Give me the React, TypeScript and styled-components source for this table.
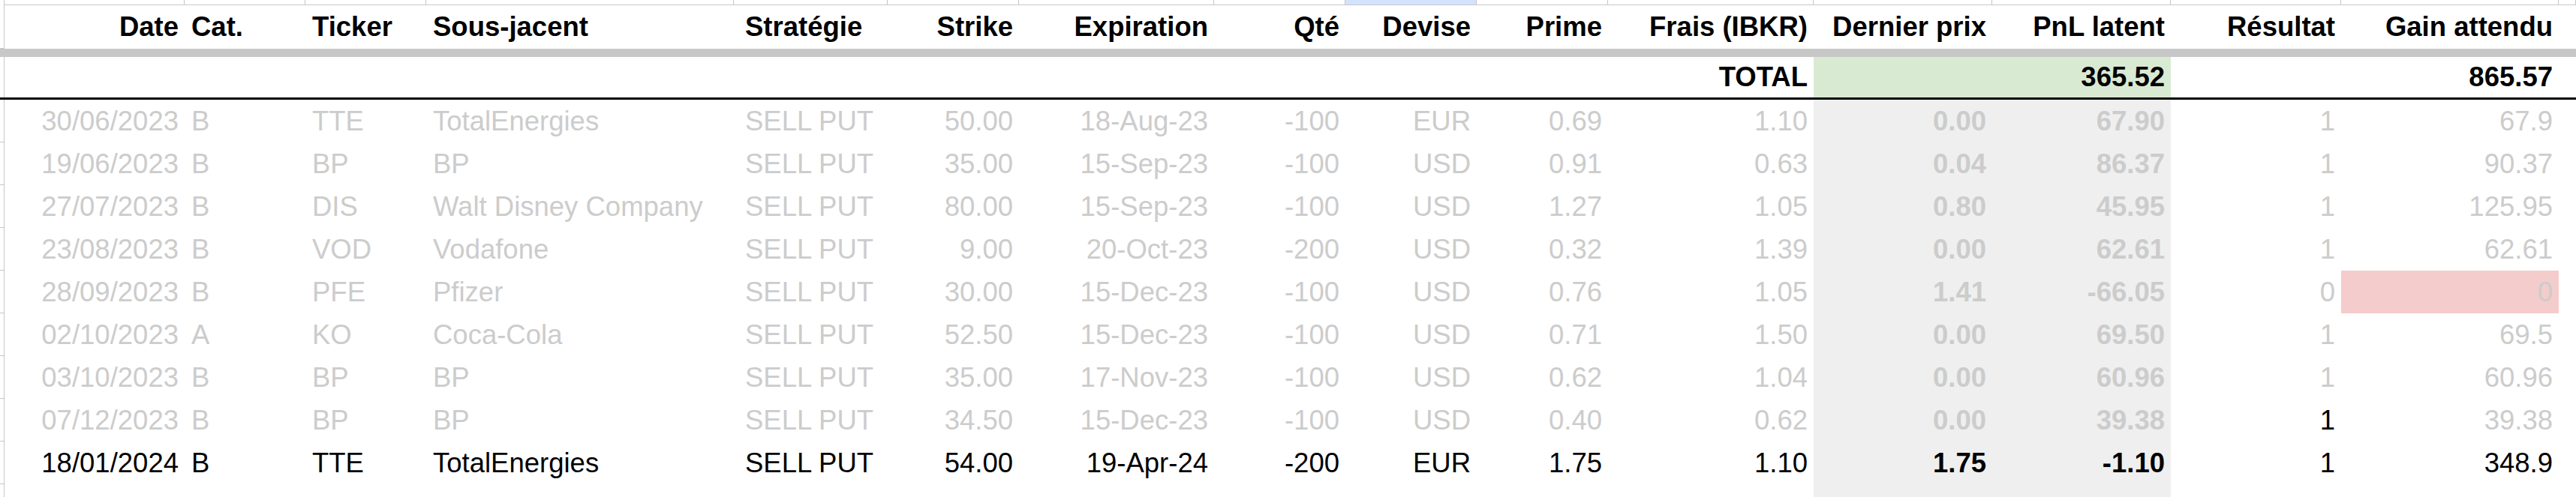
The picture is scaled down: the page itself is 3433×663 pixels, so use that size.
import React from "react";
import styled, { createGlobalStyle } from "styled-components";

const GlobalStyle = createGlobalStyle`
  html, body { margin: 0; padding: 0; background: #ffffff; }
  body { font-family: "Liberation Sans", Arial, sans-serif; }
`;

const GRID_LINE = "#c7c7c7";
const MUTED = "#cccccc";
const TEMPLATE =
  "6px 240px 161px 161px 410px 205px 175px 260px 175px 175px 175px 274px 238px 238px 227px 290px 1fr";

type Align = "left" | "right";
interface ColDef {
  title: string;
  align: Align;
  pad?: number;
  bold?: boolean;
  fill?: boolean;
}

const COLUMNS: ColDef[] = [
  { title: "Date", align: "right" },
  { title: "Cat.", align: "left" },
  { title: "Ticker", align: "left" },
  { title: "Sous-jacent", align: "left" },
  { title: "Stratégie", align: "left", pad: 15 },
  { title: "Strike", align: "right" },
  { title: "Expiration", align: "right" },
  { title: "Qté", align: "right" },
  { title: "Devise", align: "right" },
  { title: "Prime", align: "right" },
  { title: "Frais (IBKR)", align: "right" },
  { title: "Dernier prix", align: "right", bold: true, fill: true },
  { title: "PnL latent", align: "right", bold: true, fill: true },
  { title: "Résultat", align: "right" },
  { title: "Gain attendu", align: "right" },
];

interface Trade {
  values: string[];
  active?: boolean;
  resultDark?: boolean;
  lost?: boolean;
}

const TRADES: Trade[] = [
  { values: ["30/06/2023", "B", "TTE", "TotalEnergies", "SELL PUT", "50.00", "18-Aug-23", "-100", "EUR", "0.69", "1.10", "0.00", "67.90", "1", "67.9"] },
  { values: ["19/06/2023", "B", "BP", "BP", "SELL PUT", "35.00", "15-Sep-23", "-100", "USD", "0.91", "0.63", "0.04", "86.37", "1", "90.37"] },
  { values: ["27/07/2023", "B", "DIS", "Walt Disney Company", "SELL PUT", "80.00", "15-Sep-23", "-100", "USD", "1.27", "1.05", "0.80", "45.95", "1", "125.95"] },
  { values: ["23/08/2023", "B", "VOD", "Vodafone", "SELL PUT", "9.00", "20-Oct-23", "-200", "USD", "0.32", "1.39", "0.00", "62.61", "1", "62.61"] },
  { values: ["28/09/2023", "B", "PFE", "Pfizer", "SELL PUT", "30.00", "15-Dec-23", "-100", "USD", "0.76", "1.05", "1.41", "-66.05", "0", "0"], lost: true },
  { values: ["02/10/2023", "A", "KO", "Coca-Cola", "SELL PUT", "52.50", "15-Dec-23", "-100", "USD", "0.71", "1.50", "0.00", "69.50", "1", "69.5"] },
  { values: ["03/10/2023", "B", "BP", "BP", "SELL PUT", "35.00", "17-Nov-23", "-100", "USD", "0.62", "1.04", "0.00", "60.96", "1", "60.96"] },
  { values: ["07/12/2023", "B", "BP", "BP", "SELL PUT", "34.50", "15-Dec-23", "-100", "USD", "0.40", "0.62", "0.00", "39.38", "1", "39.38"], resultDark: true },
  { values: ["18/01/2024", "B", "TTE", "TotalEnergies", "SELL PUT", "54.00", "19-Apr-24", "-200", "EUR", "1.75", "1.10", "1.75", "-1.10", "1", "348.9"], active: true },
];

const Sheet = styled.div`
  width: 3433px;
  height: 663px;
  overflow: hidden;
  background: #ffffff;
`;

const Row = styled.div<{ $height: number; $bottom?: string }>`
  display: grid;
  grid-template-columns: ${TEMPLATE};
  height: ${(p) => p.$height}px;
  box-sizing: border-box;
  border-bottom: ${(p) => p.$bottom ?? "none"};
`;

const Stub = styled.div<{ $tick?: boolean }>`
  box-sizing: border-box;
  border-right: 1px solid ${GRID_LINE};
  border-bottom: ${(p) => (p.$tick ? `1px solid ${GRID_LINE}` : "none")};
`;

const LetterCell = styled.div<{ $selected?: boolean }>`
  box-sizing: border-box;
  background: ${(p) => (p.$selected ? "#d3e3fd" : "#ffffff")};
  border-right: 1px solid ${GRID_LINE};
  border-bottom: 1px solid ${GRID_LINE};
`;

const FreezeBar = styled.div`
  height: 11px;
  background: ${GRID_LINE};
`;

const Cell = styled.div<{
  $align: Align;
  $bold?: boolean;
  $muted?: boolean;
  $bg?: string;
  $pad?: number;
}>`
  display: flex;
  align-items: center;
  justify-content: ${(p) => (p.$align === "right" ? "flex-end" : "flex-start")};
  box-sizing: border-box;
  padding: 0 8px 0 ${(p) => p.$pad ?? 9}px;
  background: ${(p) => p.$bg ?? "transparent"};
  color: ${(p) => (p.$muted ? MUTED : "#000000")};
  font-size: 36.5px;
  font-weight: ${(p) => (p.$bold ? 700 : 400)};
  white-space: nowrap;
  overflow: visible;
`;

const TotalBand = styled.div`
  display: contents;
`;

export default function App() {
  return (
    <>
      <GlobalStyle />
      <Sheet>
        <Row $height={7}>
          <Stub />
          {COLUMNS.map((c, i) => (
            <LetterCell key={c.title} $selected={i === 8} />
          ))}
          <LetterCell />
        </Row>

        <Row $height={58}>
          <Stub $tick />
          {COLUMNS.map((c) => (
            <Cell key={c.title} $align={c.align} $pad={c.pad} $bold>
              {c.title}
            </Cell>
          ))}
          <Cell $align="left" />
        </Row>

        <FreezeBar />

        <Row $height={57} $bottom="3px solid #000000">
          <Stub />
          <TotalBand>
            {COLUMNS.map((c, i) => {
              let text = "";
              if (i === 10) text = "TOTAL";
              if (i === 12) text = "365.52";
              if (i === 14) text = "865.57";
              return (
                <Cell
                  key={c.title}
                  $align={c.align}
                  $pad={c.pad}
                  $bold
                  $bg={c.fill ? "#d9ead3" : undefined}
                >
                  {text}
                </Cell>
              );
            })}
          </TotalBand>
          <Cell $align="left" />
        </Row>

        {TRADES.map((t, r) => (
          <Row key={r} $height={57}>
            <Stub $tick />
            {t.values.map((v, i) => {
              const col = COLUMNS[i];
              let bg = col.fill ? "#efefef" : undefined;
              if (i === 14 && t.lost) bg = "#f4cccc";
              const dark = t.active || (i === 13 && t.resultDark);
              return (
                <Cell
                  key={i}
                  $align={col.align}
                  $pad={col.pad}
                  $bold={col.bold}
                  $muted={!dark}
                  $bg={bg}
                >
                  {v}
                </Cell>
              );
            })}
            <Cell $align="left" />
          </Row>
        ))}

        <Row $height={57}>
          <Stub />
          {COLUMNS.map((c) => (
            <Cell key={c.title} $align={c.align} $bg={c.fill ? "#efefef" : undefined} />
          ))}
          <Cell $align="left" />
        </Row>
      </Sheet>
    </>
  );
}
